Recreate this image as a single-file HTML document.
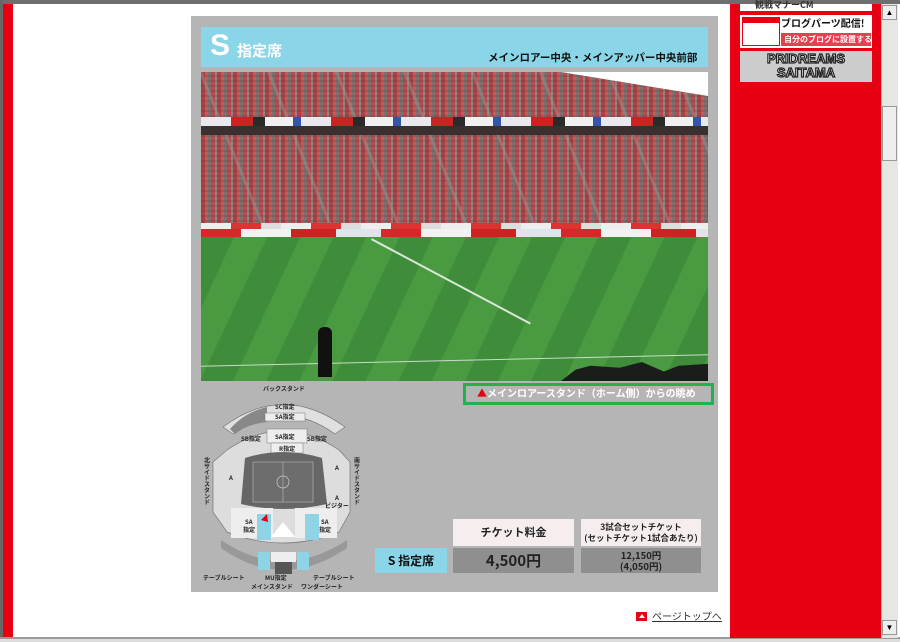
<!DOCTYPE html>
<html><head><meta charset="utf-8"><style>
*{margin:0;padding:0;box-sizing:border-box}
body{width:900px;height:642px;position:relative;overflow:hidden;background:#fff;font-family:"Liberation Sans","Noto Sans CJK JP",sans-serif}
.a{position:absolute}
.j{font-family:"Noto Sans CJK JP","Liberation Sans",sans-serif;font-weight:bold}
</style></head><body>
<div class="a" style="left:0;top:0;width:900px;height:4px;background:#6e6e6e"></div>
<div class="a" style="left:0;top:0;width:3px;height:642px;background:#666"></div>
<div class="a" style="left:3px;top:4px;width:10px;height:634px;background:#e60012"></div>
<div class="a" style="left:0;top:637px;width:900px;height:2px;background:#999"></div>
<div class="a" style="left:0;top:639px;width:900px;height:3px;background:#ddd"></div>
<div class="a" style="left:730px;top:4px;width:151px;height:634px;background:#e60012"></div>
<div class="a" style="left:881px;top:4px;width:17px;height:634px;background:#e6e6e2;border-left:1px solid #bbb"></div>
<div class="a" style="left:882px;top:5px;width:15px;height:15px;background:#eee;border:1px solid #999;font-size:8px;text-align:center;line-height:13px">▲</div>
<div class="a" style="left:882px;top:106px;width:15px;height:55px;background:#eee;border:1px solid #999"></div>
<div class="a" style="left:882px;top:620px;width:15px;height:15px;background:#eee;border:1px solid #999;font-size:8px;text-align:center;line-height:13px">▼</div>
<div class="a" style="left:740px;top:4px;width:132px;height:7px;background:#fff"></div>
<div class="a j" style="left:755px;top:0px;font-size:9px;line-height:10px;color:#333">観戦マナーCM</div>
<div class="a" style="left:740px;top:15px;width:132px;height:33px;background:#fff"></div>
<div class="a" style="left:742px;top:17px;width:38px;height:29px;border:1px solid #e60012;background:#fff"><div style="height:5px;background:#e60012"></div></div>
<div class="a j" style="left:781px;top:16px;width:90px;font-size:10px;line-height:14px;color:#111">ブログパーツ配信! J</div>
<div class="a j" style="left:781px;top:33px;width:90px;height:13px;background:#e64050;color:#fff;font-size:8px;line-height:13px;padding-left:3px;white-space:nowrap;overflow:hidden">自分のブログに設置する»</div>
<div class="a" style="left:740px;top:51px;width:132px;height:31px;background:#ccc"></div>
<div class="a" style="left:740px;top:52px;width:132px;text-align:center;font:900 13px/14px 'Liberation Sans',sans-serif;color:#fff;-webkit-text-stroke:1.2px #222">PRIDREAMS<br>SAITAMA</div>

<div class="a" style="left:191px;top:16px;width:527px;height:576px;background:#b5b5b5"></div>
<div class="a" style="left:201px;top:27px;width:507px;height:40px;background:#8ad6e8"></div>
<div class="a" style="left:210px;top:28px;font:900 30px/36px 'Liberation Sans',sans-serif;color:#fff">S</div>
<div class="a j" style="left:237px;top:41px;font-size:15px;line-height:20px;color:#fff">指定席</div>
<div class="a j" style="left:488px;top:51px;font-size:10.5px;line-height:14px;color:#111">メインロアー中央・メインアッパー中央前部</div>

<div class="a" style="left:201px;top:72px;width:507px;height:309px;overflow:hidden;background:#3f8a3a">
 <div class="a" style="left:0;top:0;width:507px;height:165px;background:repeating-linear-gradient(90deg,#a84446 0 4px,#c6595a 4px 7px,#7e7070 7px 10px,#b84b4d 10px 14px,#918585 14px 16px)"></div>
 <div class="a" style="left:0;top:0;width:507px;height:165px;background:repeating-linear-gradient(0deg,rgba(80,60,60,.2) 0 2px,rgba(0,0,0,0) 2px 5px)"></div>
 <div class="a" style="left:0;top:0;width:507px;height:165px;background:repeating-linear-gradient(68deg,rgba(0,0,0,0) 0 60px,rgba(150,150,150,.45) 60px 63px)"></div>
 <div class="a" style="left:360px;top:0;width:147px;height:24px;background:#fff;clip-path:polygon(0 0,100% 0,100% 100%)"></div>
 <div class="a" style="left:0;top:45px;width:507px;height:9px;background:repeating-linear-gradient(90deg,#e8e8ee 0 30px,#c22 30px 52px,#2a2a2a 52px 64px,#f0f0f0 64px 92px,#3355aa 92px 100px)"></div>
 <div class="a" style="left:0;top:54px;width:507px;height:9px;background:#3a3030"></div>
 <div class="a" style="left:0;top:151px;width:507px;height:6px;background:repeating-linear-gradient(90deg,#eee 0 30px,#d33 30px 60px,#ddd 60px 80px)"></div>
 <div class="a" style="left:0;top:157px;width:507px;height:8px;background:repeating-linear-gradient(90deg,#d8262a 0 40px,#f2f2f2 40px 90px,#c22 90px 135px,#e0e4ea 135px 180px)"></div>
 <div class="a" style="left:0;top:165px;width:507px;height:144px;background:repeating-linear-gradient(115deg,#3f8c3a 0 30px,#4a9a42 30px 60px)"></div>
 <div class="a" style="left:170px;top:168px;width:2px;height:180px;background:#d8e8d8;transform:rotate(-62deg);transform-origin:0 0"></div>
 <div class="a" style="left:0;top:288px;width:507px;height:1px;background:#c8dcc8;transform:rotate(-1.3deg)"></div>
 <div class="a" style="left:117px;top:255px;width:14px;height:50px;background:#111;border-radius:6px 6px 0 0"></div>
 <div class="a" style="left:360px;top:290px;width:147px;height:19px;background:#1a1d1a;clip-path:polygon(0 100%,10% 40%,20% 20%,40% 30%,55% 0,70% 50%,80% 20%,100% 10%,100% 100%)"></div>
</div>

<div class="a" style="left:463px;top:383px;width:251px;height:22px;border:3px solid #22b14c"></div>
<div class="a j" style="left:477px;top:385px;font-size:10px;line-height:15px;color:#fff"><span style="color:#e60012">▲</span>メインロアースタンド（ホーム側）からの眺め</div>

<svg class="a" style="left:195px;top:382px" width="175" height="210" viewBox="0 0 175 210" font-family="Noto Sans CJK JP,sans-serif" font-weight="bold" font-size="6" fill="#222">
 <text x="68" y="9">バックスタンド</text>
 <path d="M28 45 Q88 0 150 45 L140 52 Q88 15 38 52Z" fill="#e0e0e0" stroke="#777" stroke-width=".7"/>
 <path d="M35 47 Q50 30 72 25 L72 40 Q52 42 40 52Z" fill="#888"/>
 <rect x="70" y="31" width="40" height="8" fill="#eee" stroke="#777" stroke-width=".5"/>
 <text x="80" y="27">SC指定</text><text x="80" y="37">SA指定</text>
 <path d="M32 68 Q88 30 144 68 L155 80 L155 130 L144 150 Q88 172 32 150 L18 130 L18 80Z" fill="#ddd" stroke="#777" stroke-width=".7"/>
 <rect x="72" y="47" width="40" height="14" fill="#eee" stroke="#777" stroke-width=".5"/>
 <rect x="76" y="61" width="32" height="10" fill="#eee" stroke="#777" stroke-width=".5"/>
 <text x="80" y="57">SA指定</text><text x="84" y="69">R指定</text>
 <text x="46" y="59">SB指定</text><text x="112" y="59">SB指定</text>
 <path d="M50 76 Q88 64 127 76 L132 122 Q88 132 46 122Z" fill="#666"/>
 <rect x="58" y="80" width="60" height="40" fill="#6d6d6d" stroke="#bbb" stroke-width=".6"/>
 <line x1="88" y1="80" x2="88" y2="120" stroke="#bbb" stroke-width=".6"/>
 <circle cx="88" cy="100" r="6" fill="none" stroke="#ccc" stroke-width=".7"/>
 <rect x="36" y="126" width="42" height="30" fill="#eee"/>
 <rect x="100" y="126" width="42" height="30" fill="#eee"/>
 <path d="M76 155 L88 140 L100 155Z" fill="#fff"/>
 <rect x="62" y="132" width="14" height="26" fill="#8fd3e6"/>
 <rect x="110" y="132" width="14" height="26" fill="#8fd3e6"/>
 <path d="M72 132 L66 138 L73 140Z" fill="#e60012"/>
 <text x="34" y="98">A</text><text x="140" y="88">A</text><text x="140" y="118">A</text>
 <text x="130" y="126">ビジター</text>
 <text x="50" y="142">SA</text><text x="48" y="150">指定</text><text x="126" y="142">SA</text><text x="124" y="150">指定</text>
 <path d="M26 158 Q88 200 152 158 L152 166 Q88 210 26 166Z" fill="#999"/>
 <rect x="63" y="170" width="12" height="18" fill="#8fd3e6"/><rect x="102" y="170" width="12" height="18" fill="#8fd3e6"/>
 <rect x="76" y="170" width="25" height="10" fill="#eee"/><rect x="80" y="180" width="17" height="12" fill="#555"/>
 <text x="8" y="198">テーブルシート</text><text x="118" y="198">テーブルシート</text>
 <text x="70" y="198">MU指定</text><text x="56" y="207">メインスタンド</text><text x="106" y="207">ワンダーシート</text>
 <text x="12" y="75" writing-mode="tb">北サイドスタンド</text>
 <text x="162" y="75" writing-mode="tb">南サイドスタンド</text>
</svg>

<div class="a j" style="left:453px;top:519px;width:121px;height:27px;background:#f6eeee;text-align:center;font-size:11px;line-height:27px;color:#222">チケット料金</div>
<div class="a j" style="left:581px;top:519px;width:120px;height:27px;background:#f6eeee;text-align:center;font-size:8.5px;line-height:11px;padding-top:3px;color:#222">3試合セットチケット<br>(セットチケット1試合あたり)</div>
<div class="a j" style="left:375px;top:548px;width:72px;height:25px;background:#8ad6e8;text-align:center;font-size:12px;line-height:25px;color:#111">S 指定席</div>
<div class="a j" style="left:453px;top:548px;width:121px;height:25px;background:#8f8f8f;text-align:center;font-size:15px;line-height:25px;color:#222">4,500円</div>
<div class="a j" style="left:581px;top:548px;width:120px;height:25px;background:#8f8f8f;text-align:center;font-size:9.5px;line-height:11px;padding-top:2px;color:#222">12,150円<br>(4,050円)</div>

<div class="a" style="left:636px;top:612px;width:11px;height:9px;background:#e60012"><div style="margin:2px auto 0;width:0;height:0;border-left:3px solid transparent;border-right:3px solid transparent;border-bottom:4px solid #fff"></div></div>
<div class="a" style="left:652px;top:609px;font-size:10px;line-height:14px;color:#333;text-decoration:underline;font-family:'Noto Sans CJK JP',sans-serif">ページトップへ</div>
</body></html>
